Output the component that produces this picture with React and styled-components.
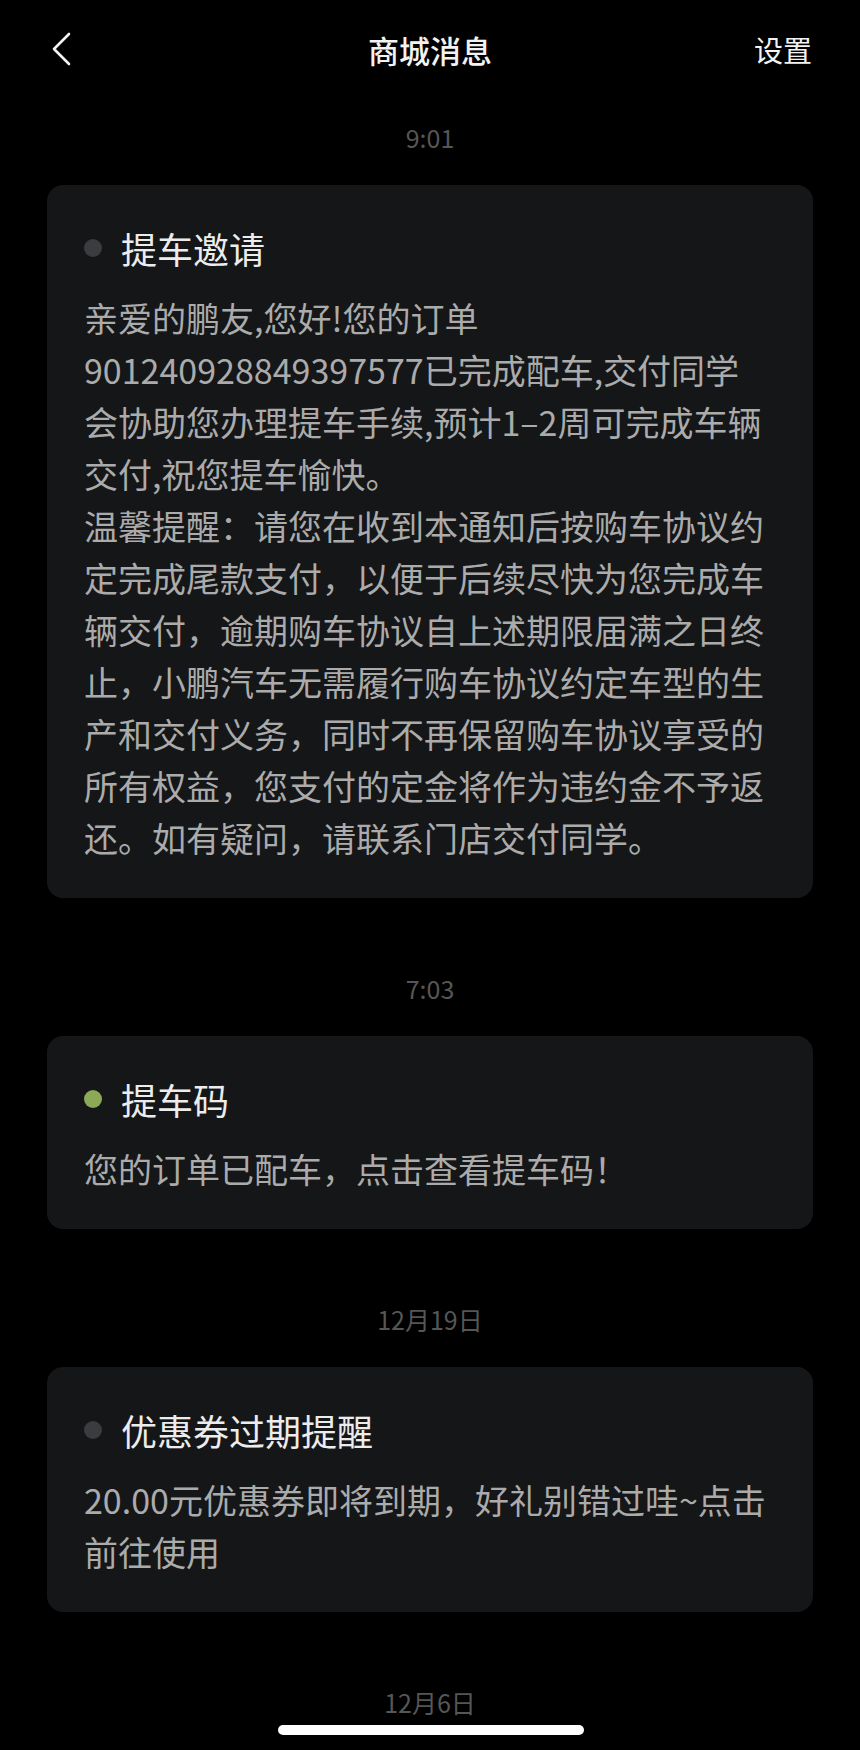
import React from 'react'
import styled, { createGlobalStyle } from 'styled-components'

const GlobalStyle = createGlobalStyle`
    html, body {
        margin: 0;
        padding: 0;
        background: #000;
    }
    body {
        font-family: "Noto Sans CJK SC", "Noto Sans", sans-serif;
    }
`

const Page = styled.div`
    width: 860px;
    min-height: 1750px;
    background: #000;
    color: #fff;
`

const Header = styled.header`
    height: 98px;
    display: flex;
    align-items: center;
    justify-content: space-between;
    padding: 0 48px 0 50px;
    box-sizing: border-box;
    position: relative;
`

const Back = styled.button`
    width: 26px;
    height: 36px;
    padding: 0;
    border: none;
    background: none;
    display: flex;
    align-items: center;
    svg {
        display: block;
    }
`

const Title = styled.h1`
    position: absolute;
    left: 0;
    right: 0;
    margin: 0;
    text-align: center;
    font-size: 31px;
    font-weight: 500;
    color: #f2f2f2;
    pointer-events: none;
`

const Setting = styled.span`
    font-size: 29px;
    color: #f2f2f2;
`

const List = styled.main`
    display: flex;
    flex-direction: column;
    padding: 21px 47px 0;
`

const Group = styled.section`
    display: flex;
    flex-direction: column;
    margin-bottom: 72px;
`

const Time = styled.div`
    text-align: center;
    font-size: 25px;
    line-height: 36px;
    color: #565656;
    margin-bottom: 30px;
`

const Card = styled.div`
    background: #151618;
    border-radius: 16px;
    padding: 38px 37px 34px;
`

const CardHead = styled.div`
    display: flex;
    align-items: center;
    gap: 19px;
    height: 50px;
    margin-bottom: 19px;
`

const Dot = styled.span`
    width: 18px;
    height: 18px;
    border-radius: 50%;
    flex-shrink: 0;
    background: ${p => (p.$active ? '#8ba957' : '#3b3c3f')};
`

const CardTitle = styled.h2`
    margin: 0;
    font-size: 36px;
    font-weight: 400;
    color: #ececec;
    line-height: 50px;
`

const Body = styled.p`
    margin: 0;
    font-size: 34px;
    line-height: 52px;
    color: #ababab;
    white-space: pre-line;
`

const HomeBar = styled.div`
    position: fixed;
    left: 278px;
    bottom: 15px;
    width: 306px;
    height: 10px;
    border-radius: 5px;
    background: #fff;
`

const messages = [
    {
        time: '9:01',
        title: '提车邀请',
        body: [
            '亲爱的鹏友,您好!您的订单\n901240928849397577已完成配车,交付同学\n会协助您办理提车手续,预计1–2周可完成车辆\n交付,祝您提车愉快。',
            '温馨提醒：请您在收到本通知后按购车协议约定完成尾款支付，以便于后续尽快为您完成车辆交付，逾期购车协议自上述期限届满之日终止，小鹏汽车无需履行购车协议约定车型的生产和交付义务，同时不再保留购车协议享受的所有权益，您支付的定金将作为违约金不予返还。如有疑问，请联系门店交付同学。',
        ],
    },
    {
        time: '7:03',
        title: '提车码',
        active: true,
        body: ['您的订单已配车，点击查看提车码！'],
    },
    {
        time: '12月19日',
        title: '优惠券过期提醒',
        body: ['20.00元优惠券即将到期，好礼别错过哇~点击前往使用'],
    },
]

function App() {
    return (
        <Page>
            <GlobalStyle />
            <Header>
                <Back aria-label="返回">
                    <svg width="22" height="34" viewBox="0 0 22 34" fill="none">
                        <path d="M19 2 L4 17 L19 32" stroke="#f2f2f2" strokeWidth="2.6" strokeLinecap="round" strokeLinejoin="round" />
                    </svg>
                </Back>
                <Title>商城消息</Title>
                <Setting>设置</Setting>
            </Header>
            <List>
                {messages.map(m => (
                    <Group key={m.time}>
                        <Time>{m.time}</Time>
                        <Card>
                            <CardHead>
                                <Dot $active={m.active} />
                                <CardTitle>{m.title}</CardTitle>
                            </CardHead>
                            {m.body.map((t, i) => (
                                <Body key={i}>{t}</Body>
                            ))}
                        </Card>
                    </Group>
                ))}
                <Time>12月6日</Time>
            </List>
            <HomeBar />
        </Page>
    )
}

export default App
